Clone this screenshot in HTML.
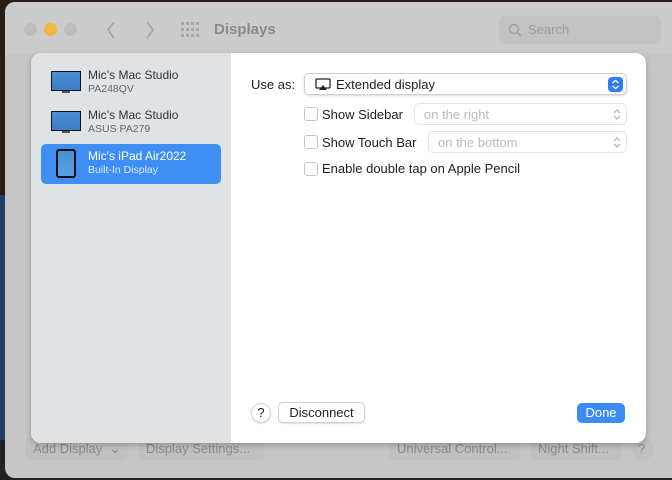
<!DOCTYPE html>
<html><head><style>
*{margin:0;padding:0;box-sizing:border-box}
body{width:672px;height:480px;overflow:hidden;background:#1a1a1a;font-family:"Liberation Sans",sans-serif;position:relative}
.desk{position:absolute;left:0;top:0;width:672px;height:480px;background:linear-gradient(#2a1f18 0 195px,#1d3f62 195px 440px,#222 440px)}
.win{position:absolute;left:5px;top:2px;width:680px;height:476px;background:#c6c6c6;border-radius:10px;overflow:hidden}
.tb{position:absolute;left:0;top:0;width:100%;height:52px;background:#cbcbcb}
.dot{position:absolute;top:21px;width:13px;height:13px;border-radius:50%;background:#bdbdbd}
.title{position:absolute;left:209px;top:19px;font-size:15px;font-weight:bold;color:#8a8a8a}
.search{position:absolute;left:494px;top:14px;width:162px;height:28px;background:#c2c2c2;border-radius:6px;color:#9e9e9e;font-size:13px;padding:6px 0 0 29px}
.sheet{position:absolute;left:31px;top:53px;width:615px;height:390px;background:#fff;border-radius:10px;overflow:hidden;box-shadow:0 2px 6px rgba(0,0,0,.25)}
.side{position:absolute;left:0;top:0;width:200px;height:390px;background:#e0e3e6}
.item{position:absolute;left:10px;width:180px;height:40px;border-radius:5px}
.item .n{position:absolute;left:47px;top:5px;font-size:12px;color:#333}
.item .s{position:absolute;left:47px;top:20px;font-size:10.5px;color:#666}
.mon{position:absolute;left:10px;top:8px;width:30px;height:20px;background:linear-gradient(#4a8fd6,#3a7dc8);border:1.5px solid #111}
.mon:after{content:"";position:absolute;left:10px;top:19px;width:8px;height:2px;background:#555}
.lbl{position:absolute;font-size:13px;color:#222}
.cb{position:absolute;width:14px;height:14px;border:1px solid #c4c4c4;border-radius:3px;background:#fff}
.pop{position:absolute;border:1px solid #e4e4e4;border-radius:5px;height:22px;font-size:13px;color:#bbb;padding:3px 9px}
.btn{position:absolute;border:1px solid #d0d0d0;border-radius:5px;background:#fff;font-size:13px;color:#222;box-shadow:0 1px 1px rgba(0,0,0,.12)}
.bb{position:absolute;top:436px;height:22px;border-radius:5px;background:#c0c0c0;color:#8a8a8a;font-size:13px;padding:3px 8px;white-space:nowrap}
</style></head><body>
<div class="desk"></div>
<div class="win">
<div class="tb">
<div class="dot" style="left:19px"></div><div class="dot" style="left:39px;background:#f5b83c"></div><div class="dot" style="left:59px"></div>
<svg style="position:absolute;left:100px;top:18px" width="60" height="20"><path d="M9 2 L3 10 L9 18" stroke="#a6a6a6" stroke-width="1.8" fill="none"/><path d="M42 2 L48 10 L42 18" stroke="#a6a6a6" stroke-width="1.8" fill="none"/></svg>
<svg style="position:absolute;left:176px;top:20px" width="18" height="16" fill="#a6a6a6"><g><rect x="0" y="0" width="3" height="3"/><rect x="5" y="0" width="3" height="3"/><rect x="10" y="0" width="3" height="3"/><rect x="15" y="0" width="3" height="3"/><rect x="0" y="6" width="3" height="3"/><rect x="5" y="6" width="3" height="3"/><rect x="10" y="6" width="3" height="3"/><rect x="15" y="6" width="3" height="3"/><rect x="0" y="12" width="3" height="3"/><rect x="5" y="12" width="3" height="3"/><rect x="10" y="12" width="3" height="3"/><rect x="15" y="12" width="3" height="3"/></g></svg>
<div class="title">Displays</div>
<div class="search">Search<svg style="position:absolute;left:9px;top:7px" width="14" height="14"><circle cx="6" cy="6" r="4.5" stroke="#a0a0a0" stroke-width="1.4" fill="none"/><path d="M9.5 9.5 L13 13" stroke="#a0a0a0" stroke-width="1.5"/></svg></div>
</div>
<div class="bb" style="left:20px;width:103px">Add Display &nbsp;⌄</div>
<div class="bb" style="left:133px;width:126px">Display Settings...</div>
<div class="bb" style="left:384px;width:131px">Universal Control...</div>
<div class="bb" style="left:525px;width:92px">Night Shift...</div>
<div class="bb" style="left:627px;width:22px;border-radius:50%;padding:3px 6px">?</div>
</div>
<div class="sheet">
<div class="side">
<div class="item" style="top:10px"><div class="mon"></div><div class="n">Mic’s Mac Studio</div><div class="s">PA248QV</div></div>
<div class="item" style="top:50px"><div class="mon"></div><div class="n">Mic’s Mac Studio</div><div class="s">ASUS PA279</div></div>
<div class="item" style="top:91px;background:#3f8ef4"><div style="position:absolute;left:15px;top:5px;width:20px;height:29px;border:2px solid #111;border-radius:3px;background:linear-gradient(#4a8fd6,#5aa0e0)"></div><div class="n" style="color:#fff">Mic's iPad Air2022</div><div class="s" style="color:#dce9fb">Built-In Display</div></div>
</div>
<div class="lbl" style="left:220px;top:24px">Use as:</div>
<div class="btn" style="left:273px;top:20px;width:323px;height:22px;box-shadow:0 1px 2px rgba(0,0,0,.15)">
<svg style="position:absolute;left:10px;top:4px" width="16" height="13"><rect x="1" y="1" width="14" height="9" rx="1" stroke="#222" stroke-width="1.3" fill="none"/><path d="M4 12 L8 7 L12 12 Z" fill="#222"/></svg>
<span style="position:absolute;left:31px;top:3px">Extended display</span>
<div style="position:absolute;right:3px;top:3px;width:15px;height:15px;background:#2f7cf6;border-radius:4px"><svg width="15" height="15"><path d="M4.5 6 L7.5 3.5 L10.5 6 M4.5 9 L7.5 11.5 L10.5 9" stroke="#fff" stroke-width="1.4" fill="none"/></svg></div></div>
<div class="cb" style="left:273px;top:54px"></div><div class="lbl" style="left:291px;top:54px">Show Sidebar</div>
<div class="pop" style="left:383px;top:50px;width:213px">on the right<svg style="position:absolute;right:4px;top:4px" width="10" height="13"><path d="M2 5 L5 2 L8 5 M2 8 L5 11 L8 8" stroke="#b0b0b0" stroke-width="1.2" fill="none"/></svg></div>
<div class="cb" style="left:273px;top:82px"></div><div class="lbl" style="left:291px;top:82px">Show Touch Bar</div>
<div class="pop" style="left:397px;top:78px;width:199px">on the bottom<svg style="position:absolute;right:4px;top:4px" width="10" height="13"><path d="M2 5 L5 2 L8 5 M2 8 L5 11 L8 8" stroke="#b0b0b0" stroke-width="1.2" fill="none"/></svg></div>
<div class="cb" style="left:273px;top:109px"></div><div class="lbl" style="left:291px;top:108px">Enable double tap on Apple Pencil</div>
<div class="btn" style="left:220px;top:350px;width:20px;height:20px;border-radius:50%;text-align:center;line-height:18px">?</div>
<div class="btn" style="left:247px;top:349px;width:87px;height:21px;text-align:center;line-height:19px">Disconnect</div>
<div style="position:absolute;left:546px;top:350px;width:48px;height:20px;background:#3b8cf6;border-radius:5px;color:#fff;font-size:13px;text-align:center;line-height:20px">Done</div>
</div>
</body></html>
